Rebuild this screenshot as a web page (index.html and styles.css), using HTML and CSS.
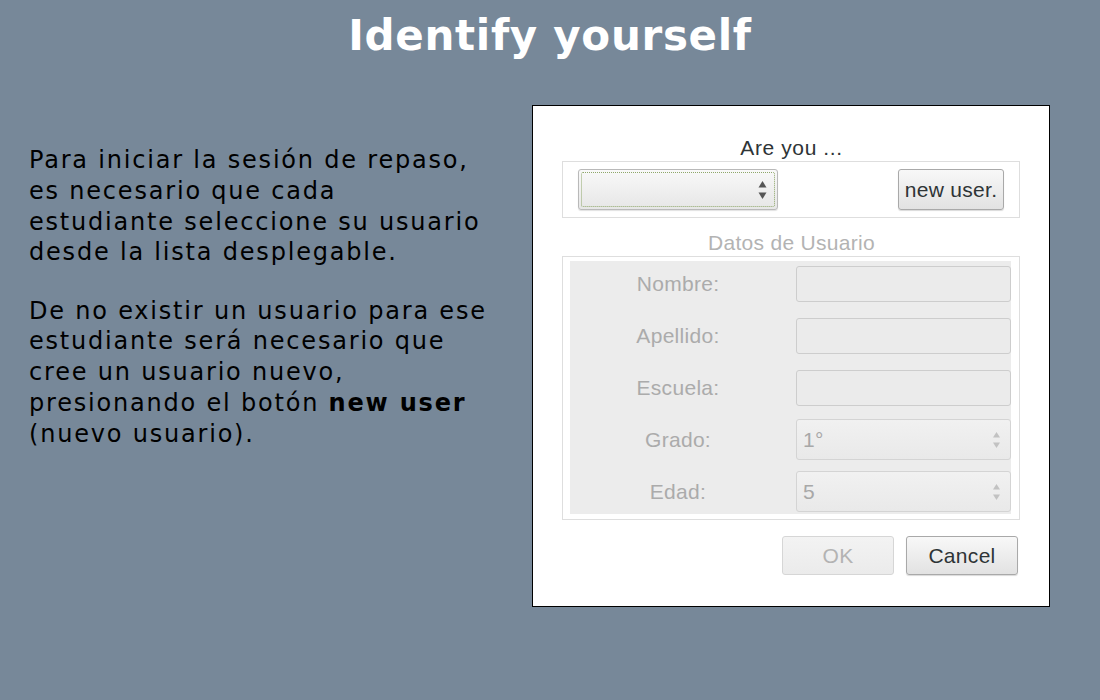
FILE: index.html
```html
<!DOCTYPE html>
<html lang="es">
<head>
<meta charset="utf-8">
<title>Identify yourself</title>
<link rel="stylesheet" href="styles.css">
</head>
<body>
<header class="header">
  <h1 class="title">Identify yourself</h1>
</header>
<main class="main">
  <section class="intro">
    <p class="para">Para iniciar la sesión de repaso,<br>es necesario que cada<br>estudiante seleccione su usuario<br>desde la lista desplegable.</p>
    <p class="para">De no existir un usuario para ese<br>estudiante será necesario que<br>cree un usuario nuevo,<br>presionando el botón <b>new user</b><br>(nuevo usuario).</p>
  </section>
  <section class="dialog">
    <div class="caption">Are you ...</div>
    <div class="frame frame-user">
      <div class="combo combo-focus">
        <span class="combo-value"></span>
        <svg class="spin" width="9" height="22" viewBox="0 0 9 22"><path d="M4.5 2 L8.5 8.5 L0.5 8.5 Z" fill="#555"/><path d="M0.5 13.5 L8.5 13.5 L4.5 20 Z" fill="#555"/></svg>
      </div>
      <div class="btn btn-new">new user.</div>
    </div>
    <div class="caption caption-dim">Datos de Usuario</div>
    <div class="frame frame-data">
      <div class="grid">
        <div class="label">Nombre:</div>
        <div class="field"></div>
        <div class="label">Apellido:</div>
        <div class="field"></div>
        <div class="label">Escuela:</div>
        <div class="field"></div>
        <div class="label">Grado:</div>
        <div class="combo combo-dim">
          <span class="combo-value">1°</span>
          <svg class="spin" width="9" height="22" viewBox="0 0 9 22"><path d="M4.5 3 L8 8.5 L1 8.5 Z" fill="#c2c2c2"/><path d="M1 13.5 L8 13.5 L4.5 19 Z" fill="#c2c2c2"/></svg>
        </div>
        <div class="label">Edad:</div>
        <div class="combo combo-dim">
          <span class="combo-value">5</span>
          <svg class="spin" width="9" height="22" viewBox="0 0 9 22"><path d="M4.5 3 L8 8.5 L1 8.5 Z" fill="#c2c2c2"/><path d="M1 13.5 L8 13.5 L4.5 19 Z" fill="#c2c2c2"/></svg>
        </div>
      </div>
    </div>
    <div class="actions">
      <div class="btn btn-off">OK</div>
      <div class="btn">Cancel</div>
    </div>
  </section>
</main>
</body>
</html>
```
FILE: styles.css
```css
html, body {
  margin: 0;
  padding: 0;
}
body {
  background: #778899;
  font-family: "DejaVu Sans", sans-serif;
  width: 1100px;
  height: 700px;
  overflow: hidden;
}
.header {
  padding-top: 11px;
}
.title {
  margin: 0;
  text-align: center;
  color: #fff;
  font-size: 42px;
  font-weight: bold;
  line-height: 49px;
  letter-spacing: 0.7px;
}
.main {
  display: flex;
  align-items: flex-start;
  padding-top: 45px;
}
.intro {
  width: 472px;
  padding-left: 29px;
  padding-top: 40px;
  color: #000;
  font-size: 24px;
  line-height: 30.8px;
  letter-spacing: 1.8px;
  white-space: nowrap;
}
.para {
  margin: 0 0 27.5px 0;
}
.para b {
  font-weight: bold;
}
.dialog {
  margin-left: 31px;
  box-sizing: border-box;
  width: 518px;
  height: 502px;
  border: 1px solid #000;
  background: #fff;
  padding: 30px 28px 0 29px;
  font-family: "Liberation Sans", Arial, sans-serif;
  font-size: 21px;
  letter-spacing: 0.3px;
}
.caption {
  text-align: center;
  color: #2e3436;
  line-height: 24px;
  height: 25px;
  letter-spacing: 0.6px;
}
.caption-dim {
  color: #b3b3b3;
  margin-top: 13px;
  height: 25px;
  letter-spacing: 0.3px;
}
.frame {
  box-sizing: border-box;
  width: 458px;
  border: 1px solid #dedede;
}
.frame-user {
  height: 57px;
  display: flex;
  align-items: center;
  justify-content: space-between;
  padding: 0 15px;
}
.frame-data {
  height: 264px;
  padding: 4px 8px 5px 7px;
}
.grid {
  background: #ececec;
  height: 253px;
  display: grid;
  grid-template-columns: 216px 215px;
  grid-auto-rows: 45px;
  column-gap: 10px;
  row-gap: 7px;
  align-items: center;
  padding-right: 1px;
}
.label {
  text-align: center;
  color: #ababab;
}
.field {
  box-sizing: border-box;
  height: 36px;
  border: 1px solid #cdcdcd;
  border-radius: 3px;
  background: #ebebeb;
}
.combo {
  box-sizing: border-box;
  height: 41px;
  border: 1px solid #b9b9b9;
  border-radius: 3px;
  background: linear-gradient(#f9f9f9, #e6e6e6);
  display: flex;
  align-items: center;
  justify-content: space-between;
  padding: 0 10px 0 6px;
  position: relative;
  box-shadow: 0 1px 1px rgba(0,0,0,0.12);
}
.combo-focus {
  width: 200px;
}
.combo-focus::after {
  content: "";
  position: absolute;
  left: 2px;
  top: 2px;
  right: 2px;
  bottom: 2px;
  border: 1px dotted #8fa86a;
  border-radius: 2px;
}
.combo-dim {
  border-color: #d4d4d4;
  background: linear-gradient(#f1f1f1, #e9e9e9);
  color: #a8a8a8;
  padding-right: 9px;
  box-shadow: none;
}
.combo-value {
  line-height: 24px;
}
.spin {
  display: block;
}
.btn {
  box-sizing: border-box;
  width: 112px;
  height: 39px;
  border: 1px solid #a9a9a9;
  border-radius: 3px;
  background: linear-gradient(#f8f8f8, #e2e2e2);
  color: #2e3436;
  display: flex;
  align-items: center;
  justify-content: center;
  box-shadow: 0 1px 1px rgba(0,0,0,0.15);
}
.btn-new {
  width: 106px;
  height: 41px;
}
.btn-off {
  border-color: #d6d6d6;
  background: linear-gradient(#f3f3f3, #ebebeb);
  color: #b3b3b3;
  box-shadow: none;
}
.actions {
  display: flex;
  justify-content: flex-end;
  gap: 12px;
  margin-top: 16px;
  padding-right: 3px;
}
```
